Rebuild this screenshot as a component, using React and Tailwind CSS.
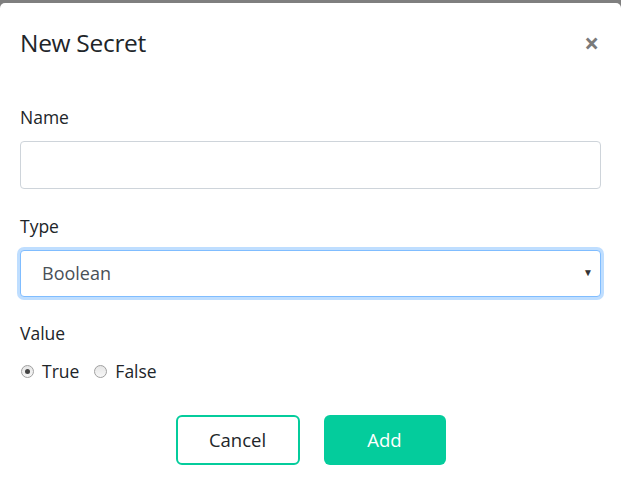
import React, { useState } from 'react';

const Radio = ({ checked, onClick, label, className }) => (
    <label onClick={onClick} className={`flex items-center cursor-pointer ${className}`}>
        <span className="w-[13px] h-[13px] rounded-full border border-[#a0a0a0] bg-gradient-to-b from-[#e6e6e6] to-[#f7f7f7] flex items-center justify-center">
            {checked && <span className="w-[5px] h-[5px] rounded-full bg-[#444]"></span>}
        </span>
        <span className="ml-[8px]">{label}</span>
    </label>
);

const App = () => {
    const [value, setValue] = useState('true');

    return (
        <div className="min-h-[484px] bg-[#7f7f7f] pt-[3px] font-['Open_Sans','Noto_Sans',sans-serif] text-[#212529]">
            <div className="bg-white rounded-t-[5px] h-[481px] flex flex-col">
                {/* Header */}
                <div className="flex items-center justify-between pl-5 pr-[22px] h-[79px] pt-[1px]">
                    <h2 className="text-[24.5px] font-medium tracking-[-0.3px]">New Secret</h2>
                    <button className="text-[26px] leading-none font-bold text-[#7a7a7a]">×</button>
                </div>

                {/* Body */}
                <div className="px-5 flex flex-col">
                    <label className="text-[17.5px] leading-6 mt-[23px] mb-[12px]">Name</label>
                    <input
                        type="text"
                        className="h-[48px] w-full rounded border border-[#ced4da] px-5 outline-none"
                    />

                    <label className="text-[17.5px] leading-6 mt-[25px] mb-[12px]">Type</label>
                    <div className="relative">
                        <select
                            defaultValue="boolean"
                            className="h-[47px] w-full appearance-none rounded border border-[#80bdff] shadow-[0_0_0_3px_rgba(0,123,255,0.25)] pl-[21px] text-[18px] text-[#495057] bg-white outline-none"
                        >
                            <option value="boolean">Boolean</option>
                            <option value="string">String</option>
                        </select>
                        <span className="absolute right-[8px] top-[15px] text-[10px] text-[#333] pointer-events-none">▼</span>
                    </div>

                    <label className="text-[17.5px] leading-6 mt-[24px]">Value</label>
                    <div className="flex items-center mt-[14px] text-[17.5px] leading-6">
                        <Radio
                            checked={value === 'true'}
                            onClick={() => setValue('true')}
                            label="True"
                            className="ml-[1px]"
                        />
                        <Radio
                            checked={value === 'false'}
                            onClick={() => setValue('false')}
                            label="False"
                            className="ml-[15px]"
                        />
                    </div>
                </div>

                {/* Footer */}
                <div className="flex justify-center gap-[24px] mt-[32px]">
                    <button className="w-[124px] h-[50px] rounded-[6px] border-2 border-[#04cc9c] text-[18.5px] text-[#212529]">
                        Cancel
                    </button>
                    <button className="w-[122px] h-[50px] rounded-[6px] bg-[#04cc9c] text-[18.5px] text-white">
                        Add
                    </button>
                </div>
            </div>
        </div>
    );
};

export default App;
